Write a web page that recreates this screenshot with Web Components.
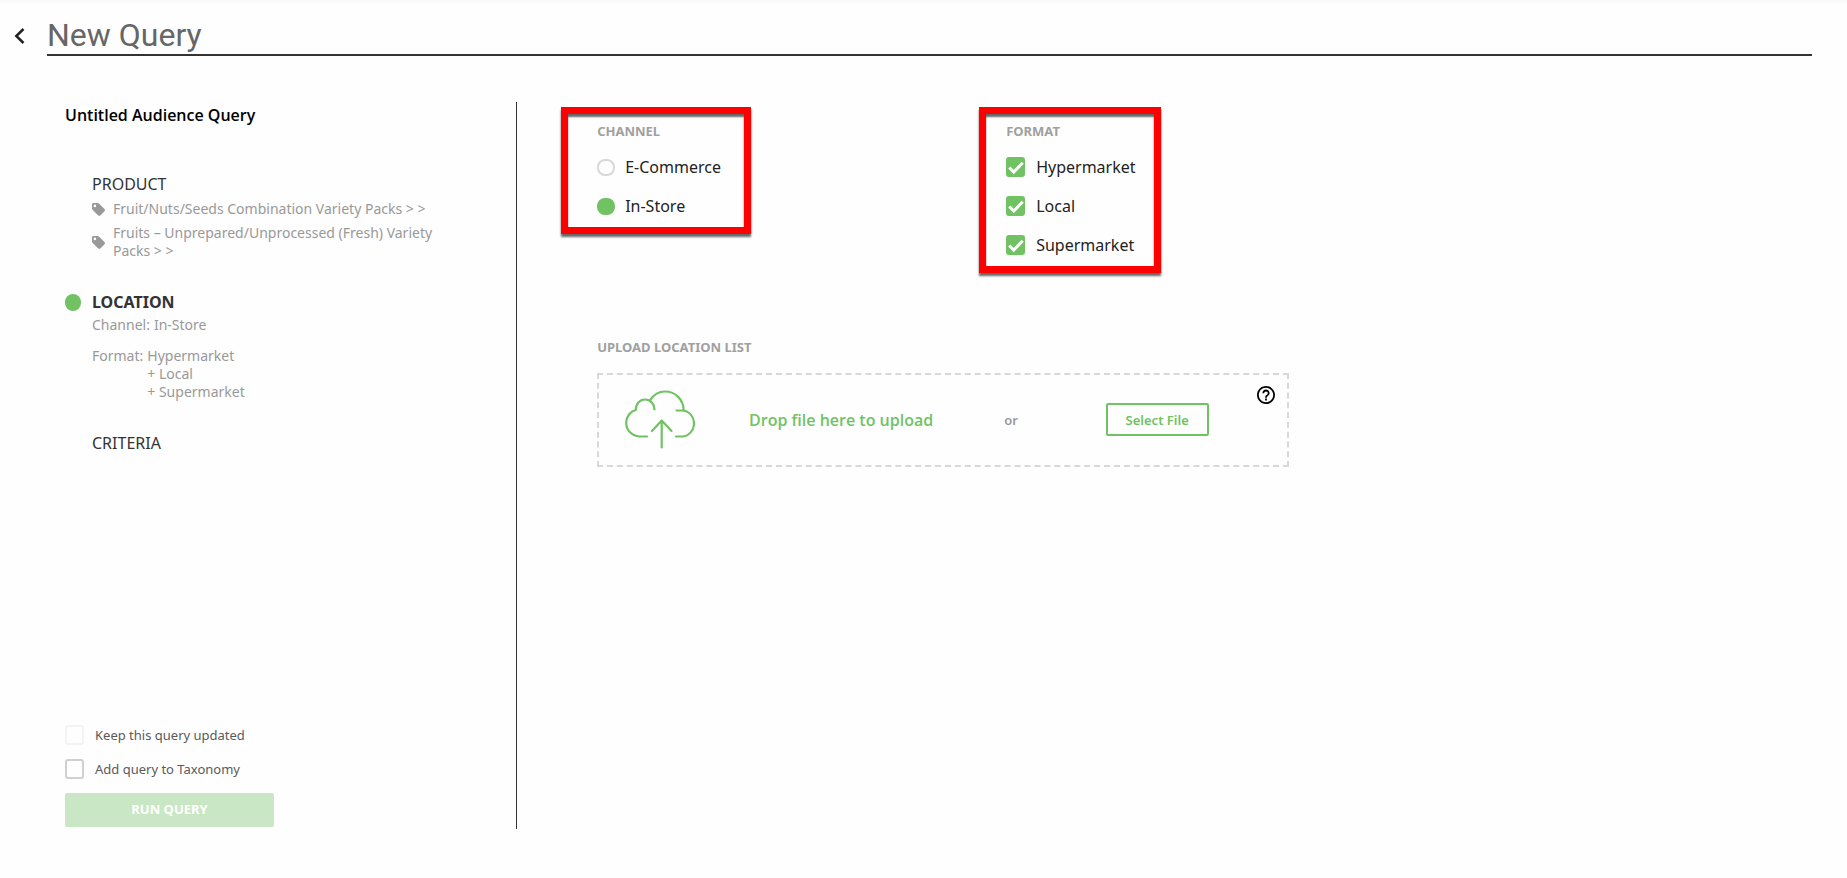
<!DOCTYPE html>
<html lang="en">
  <head>
    <meta charset="UTF-8" />
    <title>New Query</title>
    <meta name="viewport" content="width=device-width, initial-scale=1.0" />
    <style>
      :root {
        --green: #70c263;
        --dark: #333335;
        --grey: #999;
        --line: #d8d8d8;
      }

      body {
        margin: 0;
        background: #fefefe;
        color: var(--dark);
        font-family: "Noto Sans", "Open Sans", sans-serif;
        font-size: 16px;
        line-height: 20px;
      }

      check-option.small {
        --option-size: 13px;
        --option-color: #5a5a5a;
      }

      call-out.channel {
        --callout-padding: 7px 23px 11px 29px;
      }

      call-out.format {
        --callout-padding: 7px 18px 11px 20px;
      }
    </style>
  </head>

  <body>
    <query-page>
      <page-header slot="header">New Query</page-header>

      <query-summary slot="summary" name="Untitled Audience Query">
        <query-step label="Product">
          <tag-item>Fruit/Nuts/Seeds Combination Variety Packs &gt; &gt;</tag-item>
          <tag-item>Fruits – Unprepared/Unprocessed (Fresh) Variety Packs &gt; &gt;</tag-item>
        </query-step>
        <query-step label="Location" active>
          <summary-field label="Channel:"><span>In-Store</span></summary-field>
          <summary-field label="Format:" wide>
            <span>Hypermarket</span>
            <span>+ Local</span>
            <span>+ Supermarket</span>
          </summary-field>
        </query-step>
        <query-step label="Criteria"></query-step>

        <check-option slot="footer" class="small" disabled>Keep this query updated</check-option>
        <check-option slot="footer" class="small">Add query to Taxonomy</check-option>
        <run-button slot="footer">RUN QUERY</run-button>
      </query-summary>

      <call-out slot="filters" class="channel">
        <radio-group label="CHANNEL" options="E-Commerce,In-Store" value="In-Store"></radio-group>
      </call-out>
      <call-out slot="filters" class="format">
        <option-group label="FORMAT">
          <check-option checked>Hypermarket</check-option>
          <check-option checked>Local</check-option>
          <check-option checked>Supermarket</check-option>
        </option-group>
      </call-out>

      <file-drop slot="upload" label="UPLOAD LOCATION LIST"></file-drop>
    </query-page>

    <script type="module">
      // Attaches an open shadow root filled with the given markup
      class BaseElement extends HTMLElement {
        constructor() {
          super();
          this.attachShadow({ mode: "open" });
        }

        connectedCallback() {
          this.shadowRoot.innerHTML = this.render();
        }
      }

      // Page frame: header, summary on the left, form on the right
      class QueryPage extends BaseElement {
        render() {
          return `
            <style>
              :host {
                display: flex;
                flex-direction: column;
                box-sizing: border-box;
                min-height: 100vh;
                padding: 0 35px 49px 0;
                background: linear-gradient(#f8f8f8, #fefefe 4px);
              }
              .content {
                flex: 1;
                display: flex;
                padding-top: 46px;
              }
              aside {
                flex: none;
                display: flex;
                box-sizing: border-box;
                width: 28vw;
                min-width: 420px;
                padding-left: 65px;
                border-right: 1px solid var(--dark);
              }
              main {
                flex: 1;
                padding: 5px 0 0 44px;
              }
              .filters {
                display: grid;
                grid-template-columns: 418px 1fr;
                align-items: start;
                justify-items: start;
              }
              .upload {
                padding: 64px 0 0 36px;
              }
            </style>
            <slot name="header"></slot>
            <div class="content">
              <aside><slot name="summary"></slot></aside>
              <main>
                <div class="filters"><slot name="filters"></slot></div>
                <div class="upload"><slot name="upload"></slot></div>
              </main>
            </div>
          `;
        }
      }
      customElements.define("query-page", QueryPage);

      // Back button and underlined title
      class PageHeader extends BaseElement {
        render() {
          return `
            <style>
              :host {
                display: flex;
                align-items: flex-end;
              }
              button {
                width: 47px;
                height: 40px;
                padding: 0 0 0 14px;
                border: none;
                background: none;
                cursor: pointer;
              }
              svg {
                display: block;
              }
              h1 {
                flex: 1;
                margin: 0;
                padding: 17px 0 1px;
                border-bottom: 2px solid var(--dark);
                color: #666;
                font: 400 32px/36px Roboto, sans-serif;
              }
            </style>
            <button type="button" aria-label="Back">
              <svg width="11" height="16" viewBox="0 0 11 16" fill="none" stroke="#222" stroke-width="2.5">
                <path d="M9.5 1 2.3 8l7.2 7" />
              </svg>
            </button>
            <h1><slot></slot></h1>
          `;
        }
      }
      customElements.define("page-header", PageHeader);

      // Left panel with the steps of the query
      class QuerySummary extends BaseElement {
        render() {
          return `
            <style>
              :host {
                flex: 1;
                display: flex;
                flex-direction: column;
              }
              h2 {
                margin: 0;
                padding: 1px 0 46px;
                color: #000;
                font: 600 16px/24px "Open Sans", sans-serif;
              }
              .steps {
                display: grid;
                gap: 31px;
                padding-right: 60px;
              }
              .footer {
                display: grid;
                justify-items: start;
                gap: 14px;
                margin-top: auto;
                padding: 24px 0 2px;
              }
            </style>
            <h2>${this.getAttribute("name")}</h2>
            <div class="steps"><slot></slot></div>
            <div class="footer"><slot name="footer"></slot></div>
          `;
        }
      }
      customElements.define("query-summary", QuerySummary);

      class QueryStep extends BaseElement {
        render() {
          return `
            <style>
              :host {
                display: grid;
                grid-template-columns: 27px 1fr;
                align-items: center;
                color: var(--grey);
                font-size: 14px;
                line-height: 18px;
              }
              .marker {
                width: 16px;
                height: 17px;
                border-radius: 8px;
              }
              :host([active]) .marker {
                background: var(--green);
              }
              h3 {
                margin: 0;
                color: var(--dark);
                font-size: 16px;
                font-weight: 400;
                line-height: 22px;
                text-transform: uppercase;
              }
              :host([active]) h3 {
                font-weight: 700;
              }
              .body {
                grid-column: 2;
                display: grid;
                row-gap: 1px;
              }
            </style>
            <span class="marker"></span>
            <h3>${this.getAttribute("label")}</h3>
            <div class="body"><slot></slot></div>
          `;
        }
      }
      customElements.define("query-step", QueryStep);

      class TagItem extends BaseElement {
        render() {
          return `
            <style>
              :host {
                display: grid;
                grid-template-columns: 13px 1fr;
                align-items: center;
                gap: 8px;
                padding-top: 5px;
              }
              svg {
                display: block;
              }
            </style>
            <svg width="13" height="13" viewBox="0 0 13 13" fill="var(--grey)">
              <path fill-rule="evenodd" d="M1.4 0h4.3c.5 0 .9.2 1.200.5l5.600 5.600c.6.600.6 1.500 0 2.100l-4.200 4.200c-.6.6-1.500.6-2.100 0L.5 6.700C.2 6.400 0 6 0 5.600V1.400C0 .6.6 0 1.400 0zM2.900 1.600a1.300 1.300 0 1 0 0 2.600 1.300 1.300 0 0 0 0-2.600z" />
            </svg>
            <span><slot></slot></span>
          `;
        }
      }
      customElements.define("tag-item", TagItem);

      class SummaryField extends BaseElement {
        render() {
          return `
            <style>
              :host {
                display: flex;
                gap: 4px;
                padding-top: 3px;
              }
              :host([wide]) {
                padding-top: 12px;
              }
              .values {
                display: grid;
              }
            </style>
            <span>${this.getAttribute("label")}</span>
            <div class="values"><slot></slot></div>
          `;
        }
      }
      customElements.define("summary-field", SummaryField);

      class RunButton extends BaseElement {
        render() {
          return `
            <style>
              :host {
                display: block;
              }
              button {
                display: block;
                width: 209px;
                height: 34px;
                padding: 0 0 2px;
                border: none;
                border-radius: 2px;
                background: #c9e7c4;
                color: #fff;
                font: inherit;
                font-size: 13px;
                font-weight: 700;
              }
            </style>
            <button type="button" disabled><slot></slot></button>
          `;
        }
      }
      customElements.define("run-button", RunButton);

      // Tick box with its label
      class CheckOption extends BaseElement {
        render() {
          const checked = this.hasAttribute("checked") ? "checked" : "";
          const disabled = this.hasAttribute("disabled") ? "disabled" : "";
          return `
            <style>
              :host {
                display: block;
              }
              label {
                display: grid;
                grid-template-columns: 19px auto;
                align-items: center;
                column-gap: 11px;
                color: var(--option-color, #222);
                font-size: var(--option-size, 16px);
                line-height: 20px;
              }
              input {
                appearance: none;
                grid-area: 1 / 1;
                box-sizing: border-box;
                width: 19px;
                height: 20px;
                margin: 0;
                border: 2px solid #d0d0d0;
                border-radius: 3px;
              }
              input:disabled {
                border-color: #f3f3f3;
              }
              input:checked {
                border-color: var(--green);
                background: var(--green);
              }
              svg {
                grid-area: 1 / 1;
                visibility: hidden;
                pointer-events: none;
              }
              input:checked + svg {
                visibility: visible;
              }
            </style>
            <label>
              <input type="checkbox" ${checked} ${disabled} />
              <svg width="19" height="20" viewBox="0 0 19 20" fill="none" stroke="#fff" stroke-width="3">
                <path d="M3.300 10.500 7.800 15 16.700 5.800" />
              </svg>
              <span><slot></slot></span>
            </label>
          `;
        }
      }
      customElements.define("check-option", CheckOption);

      const groupStyles = `
        :host {
          display: block;
        }
        fieldset {
          display: grid;
          gap: 19px;
          margin: 0;
          padding: 0;
          border: none;
        }
        legend {
          padding: 0 0 16px;
          color: #a0a0a0;
          font-size: 13px;
          font-weight: 700;
          line-height: 20px;
        }
      `;

      class OptionGroup extends BaseElement {
        render() {
          return `
            <style>${groupStyles}</style>
            <fieldset>
              <legend>${this.getAttribute("label")}</legend>
              <slot></slot>
            </fieldset>
          `;
        }
      }
      customElements.define("option-group", OptionGroup);

      // Radios share one shadow root so that the browser groups them
      class RadioGroup extends BaseElement {
        render() {
          const value = this.getAttribute("value");
          const options = this.getAttribute("options").split(",");
          return `
            <style>
              ${groupStyles}
              label {
                display: flex;
                align-items: center;
                gap: 10px;
                color: #222;
              }
              input {
                appearance: none;
                box-sizing: border-box;
                width: 18px;
                height: 17px;
                margin: 0;
                border: 2px solid var(--line);
                border-radius: 8px;
              }
              input:checked {
                border-color: var(--green);
                background: var(--green);
              }
            </style>
            <fieldset>
              <legend>${this.getAttribute("label")}</legend>
              ${options
                .map(
                  (option) => `
                    <label>
                      <input type="radio" name="channel" value="${option}" ${option === value ? "checked" : ""} />
                      ${option}
                    </label>
                  `
                )
                .join("")}
            </fieldset>
          `;
        }
      }
      customElements.define("radio-group", RadioGroup);

      // Red frame around a highlighted part of the form
      class CallOut extends BaseElement {
        render() {
          return `
            <style>
              :host {
                display: block;
                padding: var(--callout-padding);
                border: 7px solid #f00;
                box-shadow: 0 3px 2px rgba(0, 0, 0, 0.6), inset 0 3px 2px rgba(0, 0, 0, 0.6);
              }
            </style>
            <slot></slot>
          `;
        }
      }
      customElements.define("call-out", CallOut);

      // Dashed area for the location file
      class FileDrop extends BaseElement {
        render() {
          return `
            <style>
              :host {
                display: block;
                max-width: 692px;
              }
              h4 {
                margin: 0 0 16px;
                color: #a0a0a0;
                font-size: 13px;
                font-weight: 700;
                line-height: 20px;
              }
              .drop {
                display: grid;
                grid-template-columns: 122fr 240fr 100fr 192fr 34fr;
                align-items: center;
                justify-items: center;
                height: 89px;
                padding-bottom: 1px;
                border: 2px dashed var(--line);
              }
              svg {
                display: block;
              }
              strong {
                color: var(--green);
                font: 600 16px/20px "Open Sans", sans-serif;
              }
              .or {
                color: var(--grey);
                font-size: 13px;
                font-weight: 600;
              }
              button {
                padding: 0;
                border: none;
                background: none;
                cursor: pointer;
              }
              .select {
                width: 103px;
                height: 33px;
                border: 2px solid var(--green);
                border-radius: 2px;
                color: var(--green);
                font: inherit;
                font-size: 13px;
                font-weight: 600;
              }
              .help {
                align-self: start;
                justify-self: start;
                padding-top: 11px;
                padding-left: 4px;
              }
            </style>
            <h4>${this.getAttribute("label")}</h4>
            <div class="drop">
              <svg width="70" height="59" viewBox="0 0 70 59" fill="none" stroke="var(--green)" stroke-width="2.200" stroke-linecap="round" stroke-linejoin="round">
                <path d="M22 46.500h-7.500C7 46 1.200 40.500 1.200 32.700c0-6.500 4.200-11.200 9.600-12.700C10.700 14 14.500 9.500 20 9.500S29.500 14 29.500 19.500" />
                <path d="M25 10.200C28.500 5 34 1.500 40 1.500c10.500 0 18.500 8 18.700 19" />
                <path d="M51.500 20.500h5.500c7 0 12 6 12 13s-5.500 13-12 13h-6" />
                <path d="M36.700 57.500V31M27 41l9.700-10.500L46.500 41" />
              </svg>
              <strong>Drop file here to upload</strong>
              <span class="or">or</span>
              <button type="button" class="select">Select File</button>
              <button type="button" class="help" aria-label="Help">
                <svg width="18" height="18" viewBox="2 2 20 20" fill="#000">
                  <path d="M11 18h2v-2h-2v2zm1-16C6.480 2 2 6.480 2 12s4.480 10 10 10 10-4.480 10-10S17.520 2 12 2zm0 18c-4.410 0-8-3.590-8-8s3.590-8 8-8 8 3.590 8 8-3.590 8-8 8zm0-14c-2.210 0-4 1.790-4 4h2c0-1.100.9-2 2-2s2 .9 2 2c0 2-3 1.750-3 5h2c0-2.250 3-2.500 3-5 0-2.210-1.790-4-4-4z" />
                </svg>
              </button>
            </div>
          `;
        }
      }
      customElements.define("file-drop", FileDrop);
    </script>
  </body>
</html>
